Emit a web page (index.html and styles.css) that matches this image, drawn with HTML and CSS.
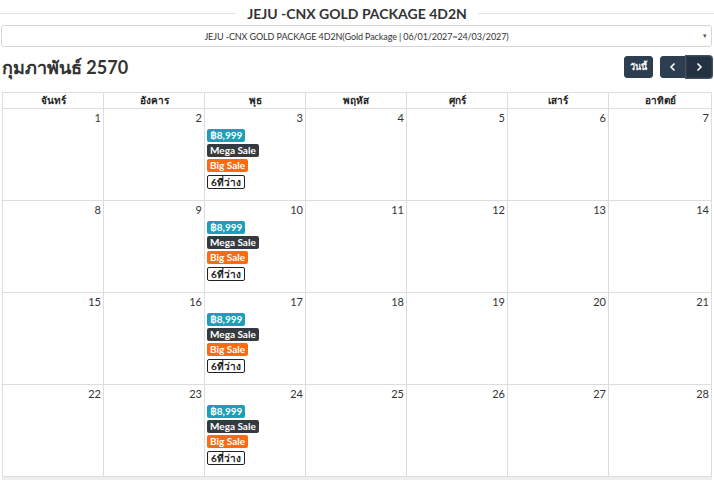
FILE: index.html
```html
<!DOCTYPE html>
<html lang="th">
<head>
    <meta charset="UTF-8">
    <meta name="viewport" content="width=device-width, initial-scale=1.0">
    <title>JEJU -CNX GOLD PACKAGE 4D2N</title>
    <link rel="stylesheet" href="styles.css">
</head>
<body>
    <div class="page">
        <h2 class="pkg-title"><span>JEJU -CNX GOLD PACKAGE 4D2N</span></h2>

        <div class="pkg-select">
            <span>JEJU -CNX GOLD PACKAGE 4D2N(Gold Package | 06/01/2027~24/03/2027)</span>
            <span class="caret">▾</span>
        </div>

        <div class="cal-toolbar">
            <h3 class="cal-month">กุมภาพันธ์ 2570</h3>
            <div class="cal-buttons">
                <button class="btn">วันนี้</button>
                <div class="btn-group">
                    <button class="btn btn-arrow">
                        <svg width="10" height="10" viewBox="0 0 10 10"><path d="M6.5 1.5L3 5l3.5 3.5" fill="none" stroke="#fff" stroke-width="1.6"/></svg>
                    </button>
                    <button class="btn btn-arrow active">
                        <svg width="10" height="10" viewBox="0 0 10 10"><path d="M3.5 1.5L7 5 3.5 8.5" fill="none" stroke="#fff" stroke-width="1.6"/></svg>
                    </button>
                </div>
            </div>
        </div>

        <table class="cal">
            <colgroup>
                <col class="col-day"><col class="col-day"><col class="col-day"><col class="col-day"><col class="col-day"><col class="col-day"><col>
            </colgroup>
            <thead>
                <tr>
                    <th>จันทร์</th><th>อังคาร</th><th>พุธ</th><th>พฤหัส</th><th>ศุกร์</th><th>เสาร์</th><th>อาทิตย์</th>
                </tr>
            </thead>
            <tbody>
                <tr>
                    <td><div class="day">1</div></td>
                    <td><div class="day">2</div></td>
                    <td>
                        <div class="day">3</div>
                        <div class="events">
                            <span class="tag tag-price">฿8,999</span>
                            <span class="tag tag-mega">Mega Sale</span>
                            <span class="tag tag-big">Big Sale</span>
                            <span class="tag tag-seat">6ที่ว่าง</span>
                        </div>
                    </td>
                    <td><div class="day">4</div></td>
                    <td><div class="day">5</div></td>
                    <td><div class="day">6</div></td>
                    <td><div class="day">7</div></td>
                </tr>
                <tr>
                    <td><div class="day">8</div></td>
                    <td><div class="day">9</div></td>
                    <td>
                        <div class="day">10</div>
                        <div class="events">
                            <span class="tag tag-price">฿8,999</span>
                            <span class="tag tag-mega">Mega Sale</span>
                            <span class="tag tag-big">Big Sale</span>
                            <span class="tag tag-seat">6ที่ว่าง</span>
                        </div>
                    </td>
                    <td><div class="day">11</div></td>
                    <td><div class="day">12</div></td>
                    <td><div class="day">13</div></td>
                    <td><div class="day">14</div></td>
                </tr>
                <tr>
                    <td><div class="day">15</div></td>
                    <td><div class="day">16</div></td>
                    <td>
                        <div class="day">17</div>
                        <div class="events">
                            <span class="tag tag-price">฿8,999</span>
                            <span class="tag tag-mega">Mega Sale</span>
                            <span class="tag tag-big">Big Sale</span>
                            <span class="tag tag-seat">6ที่ว่าง</span>
                        </div>
                    </td>
                    <td><div class="day">18</div></td>
                    <td><div class="day">19</div></td>
                    <td><div class="day">20</div></td>
                    <td><div class="day">21</div></td>
                </tr>
                <tr>
                    <td><div class="day">22</div></td>
                    <td><div class="day">23</div></td>
                    <td>
                        <div class="day">24</div>
                        <div class="events">
                            <span class="tag tag-price">฿8,999</span>
                            <span class="tag tag-mega">Mega Sale</span>
                            <span class="tag tag-big">Big Sale</span>
                            <span class="tag tag-seat">6ที่ว่าง</span>
                        </div>
                    </td>
                    <td><div class="day">25</div></td>
                    <td><div class="day">26</div></td>
                    <td><div class="day">27</div></td>
                    <td><div class="day">28</div></td>
                </tr>
            </tbody>
        </table>
        <div class="cal-foot"></div>
    </div>
</body>
</html>
```

FILE: styles.css
```css
body, html {
    margin: 0;
    padding: 0;
    font-family: 'Lato', 'Noto Sans', sans-serif;
    color: #333;
    background: #fff;
}
.page {
    padding: 0 2px 0 1px;
}
.pkg-title {
    display: flex;
    align-items: center;
    margin: 0 -2px 0 -1px;
    padding-top: 5px;
    height: 17px;
    font-size: 14px;
    font-weight: 700;
    color: #333;
}
.pkg-title::before,
.pkg-title::after {
    content: "";
    flex: 1;
    height: 1px;
    background: #e2e2e2;
}
.pkg-title span {
    padding: 0 11px;
}
.pkg-select {
    position: relative;
    margin-top: 3px;
    height: 20px;
    border: 1px solid #d6d6d6;
    border-radius: 3px;
    display: flex;
    align-items: center;
    justify-content: center;
    font-size: 9px;
    letter-spacing: -0.1px;
    color: #333;
}
.pkg-select .caret {
    position: absolute;
    right: 4px;
    top: 5px;
    font-size: 7px;
    color: #555;
}
.cal-toolbar {
    display: flex;
    justify-content: space-between;
    align-items: center;
    height: 22px;
    margin-top: 9px;
    padding-left: 1px;
}
.cal-month {
    margin: 0;
    font-size: 18px;
    line-height: 22px;
    font-weight: 700;
    color: #333;
}
.cal-buttons {
    display: flex;
    gap: 7px;
}
.btn {
    height: 22px;
    padding: 0 5px;
    border: 1px solid #2c3e50;
    border-radius: 3px;
    background: #2c3e50;
    color: #fff;
    font-family: inherit;
    font-size: 9px;
    font-weight: 700;
    display: flex;
    align-items: center;
    justify-content: center;
}
.btn-group {
    display: flex;
}
.btn-arrow {
    width: 26px;
    padding: 0;
}
.btn-group .btn-arrow:first-child {
    border-radius: 3px 0 0 3px;
}
.btn-group .btn-arrow:last-child {
    border-radius: 0 3px 3px 0;
}
.btn-arrow.active {
    background: #233242;
    box-shadow: 0 0 0 1px #46515c;
}
.cal {
    margin: 14px 0 0 1px;
    width: 710px;
    border-collapse: collapse;
    table-layout: fixed;
}
.col-day {
    width: 101px;
}
.cal th {
    height: 14px;
    padding: 0;
    border: 1px solid #ddd;
    font-size: 10px;
    font-weight: 700;
    color: #222;
}
.cal td {
    height: 91px;
    padding: 0;
    border: 1px solid #ddd;
    vertical-align: top;
}
.day {
    text-align: right;
    font-size: 11px;
    padding: 2px 2px 0 0;
    color: #333;
}
.events {
    display: flex;
    flex-direction: column;
    align-items: flex-start;
    gap: 2px;
    padding: 5px 0 0 2px;
}
.tag {
    height: 13px;
    line-height: 13px;
    padding: 0 3px;
    border-radius: 2px;
    font-size: 10px;
    font-weight: 700;
    color: #fff;
}
.tag-price {
    background: #17a2b8;
}
.tag-mega {
    background: #343a40;
}
.tag-big {
    background: #fd6a10;
}
.tag-seat {
    height: 12px;
    line-height: 12px;
    margin-top: 1px;
    border: 1px solid #222;
    background: #fff;
    color: #222;
}
.cal-foot {
    margin-left: 1px;
    width: 710px;
    height: 4px;
    background: #eee;
}
```
